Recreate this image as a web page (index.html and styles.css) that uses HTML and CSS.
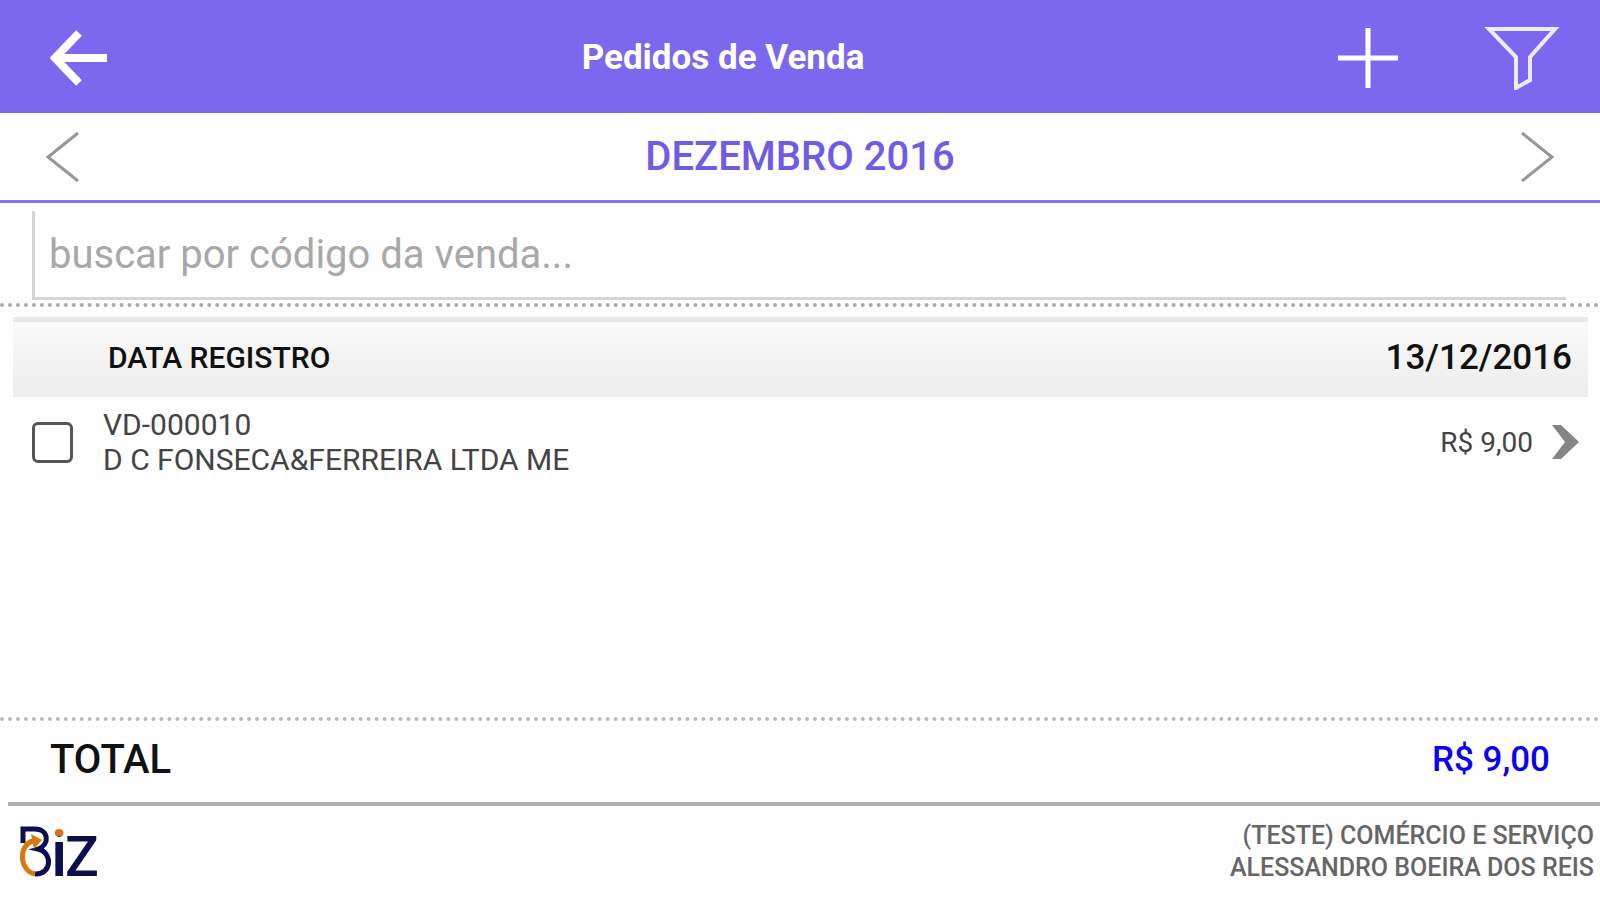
FILE: index.html
```html
<!DOCTYPE html>
<html lang="pt-BR">
<head>
    <meta charset="UTF-8">
    <meta name="viewport" content="width=device-width, initial-scale=1.0">
    <title>Pedidos de Venda</title>
    <link rel="stylesheet" href="styles.css">
</head>
<body>
    <!-- Top Bar -->
    <header class="topbar">
        <a class="back" href="#" aria-label="Voltar">
            <svg width="58" height="56" viewBox="0 0 58 56"><path d="M29 3L5 28l24 25M5 28h52" fill="none" stroke="#fff" stroke-width="8"/></svg>
        </a>
        <h1>Pedidos de Venda</h1>
        <button type="button" aria-label="Adicionar">
            <svg width="60" height="60" viewBox="0 0 60 60"><path d="M30 0v60M0 30h60" stroke="#fff" stroke-width="5"/></svg>
        </button>
        <button type="button" aria-label="Filtrar">
            <svg width="76" height="64" viewBox="0 0 76 64"><path d="M5 3h66L46 31v23l-14 8V31z" fill="none" stroke="#eeebff" stroke-width="4"/></svg>
        </button>
    </header>

    <!-- Month Selector -->
    <nav class="month">
        <button type="button" aria-label="Mês anterior">
            <svg width="34" height="50" viewBox="0 0 34 50"><path d="M32 1L2 25l30 24" fill="none" stroke="#959595" stroke-width="3"/></svg>
        </button>
        <h2>DEZEMBRO 2016</h2>
        <button type="button" aria-label="Próximo mês">
            <svg width="34" height="50" viewBox="0 0 34 50"><path d="M2 1l30 24L2 49" fill="none" stroke="#959595" stroke-width="3"/></svg>
        </button>
    </nav>

    <div class="search">
        <input type="text" placeholder="buscar por código da venda..." aria-label="buscar por código da venda">
    </div>

    <!-- Orders -->
    <main class="orders">
        <div class="group">
            <h3>DATA REGISTRO</h3>
            <time datetime="2016-12-13">13/12/2016</time>
        </div>
        <div class="order">
            <input type="checkbox" id="vd10">
            <label for="vd10">VD-000010<br>D C FONSECA&amp;FERREIRA LTDA ME</label>
            <span class="price">R$ 9,00</span>
            <a href="#" aria-label="Abrir pedido">
                <svg width="28" height="36" viewBox="0 0 28 36"><path d="M0 1h9l18 17L9 35H0l13-17z" fill="#858585"/></svg>
            </a>
        </div>
    </main>

    <div class="total">
        <strong>TOTAL</strong>
        <span>R$ 9,00</span>
    </div>

    <footer class="footer">
        <svg class="logo" width="84" height="90" viewBox="0 -18 84 90" role="img" aria-label="Biz">
            <defs>
                <linearGradient id="dot" x1="0" y1="0" x2="0" y2="54" gradientUnits="userSpaceOnUse">
                    <stop offset="0.2" stop-color="#d9701a"/>
                    <stop offset="0.2" stop-color="#0b0f4d"/>
                </linearGradient>
            </defs>
            <path d="M3 18V4h12c14 0 15 16 3 20c15 3 14 26-3 25" fill="none" stroke="#0b0f4d" stroke-width="5"/>
            <path d="M15 49C-1 46-2 20 13 16" fill="none" stroke="#d9780c" stroke-width="5"/>
            <path d="M11 9l11 6-8 9z" fill="#d9780c"/>
            <text class="logo-i" x="31" y="51" fill="url(#dot)">i</text>
            <text class="logo-z" x="45" y="51" fill="#0b0f4d">Z</text>
        </svg>
        <p>(TESTE) COMÉRCIO E SERVIÇO<br>ALESSANDRO BOEIRA DOS REIS</p>
    </footer>
</body>
</html>
```

FILE: styles.css
```css
* {
    box-sizing: border-box;
}
body {
    font-family: Roboto, 'Liberation Sans', sans-serif;
    margin: 0;
    min-height: 100vh;
    display: flex;
    flex-direction: column;
    background-color: #fefefe;
    color: #111;
}
h1, h2, h3, p {
    margin: 0;
}
button {
    padding: 0;
    border: none;
    background: none;
    cursor: pointer;
}
svg {
    display: block;
}
.topbar {
    height: 113px;
    padding: 2px 40px 0 50px;
    display: flex;
    align-items: center;
    background-color: #7b68ee;
    color: #fff;
}
.topbar h1 {
    flex: 1;
    font-size: 35px;
    text-align: center;
}
.topbar button + button {
    margin-left: 86px;
}
.month {
    height: 90px;
    padding: 0 46px;
    display: flex;
    align-items: center;
    justify-content: space-between;
    border-bottom: 3px solid #8673ec;
}
.month h2 {
    font-size: 40px;
    font-weight: 500;
    color: #6f5be6;
}
.search {
    padding: 8px 34px 3px 32px;
    border-bottom: 4px dotted #aaa;
}
.search input {
    display: block;
    width: 100%;
    height: 89px;
    padding: 0 14px;
    border: solid #d5d5d5;
    border-width: 0 0 3px 3px;
    background: none;
    font-family: inherit;
    font-size: 40px;
    color: #333;
}
.search input::placeholder {
    color: #a8a8a8;
}
.orders {
    flex: 1;
    padding: 10px 12px 0 13px;
}
.group {
    height: 80px;
    padding: 0 16px 5px 95px;
    display: flex;
    align-items: center;
    justify-content: space-between;
    border-top: 5px solid #e9e9e9;
    background: linear-gradient(#fafafa, #ececec);
}
.group h3 {
    font-size: 30px;
    font-weight: 500;
}
.group time {
    font-size: 35px;
    font-weight: 500;
}
.order {
    padding: 10px 8px 10px 19px;
    display: flex;
    align-items: center;
    font-size: 30px;
    line-height: 35px;
    color: #444;
}
.order input {
    appearance: none;
    width: 41px;
    height: 41px;
    margin: 0 30px 0 0;
    border: 3px solid #555;
    border-radius: 6px;
}
.order input:checked {
    background-color: #7b68ee;
}
.order label {
    flex: 1;
}
.price {
    margin-right: 19px;
    font-size: 28px;
}
.total {
    height: 85px;
    padding: 0 50px 4px;
    display: flex;
    align-items: center;
    justify-content: space-between;
    border-top: 4px dotted #bbb;
    font-size: 40px;
}
.total strong {
    font-weight: 500;
}
.total span {
    font-size: 35px;
    font-weight: 500;
    color: #0b00f5;
}
.footer {
    height: 98px;
    margin-left: 8px;
    padding: 0 6px 2px 12px;
    display: flex;
    align-items: center;
    justify-content: space-between;
    border-top: 4px solid #b0b0b0;
    font-size: 25px;
    font-weight: 500;
    line-height: 32px;
    text-align: right;
    color: #666;
}
.logo-i {
    font-size: 64px;
}
.logo-z {
    font-size: 56px;
}
```
